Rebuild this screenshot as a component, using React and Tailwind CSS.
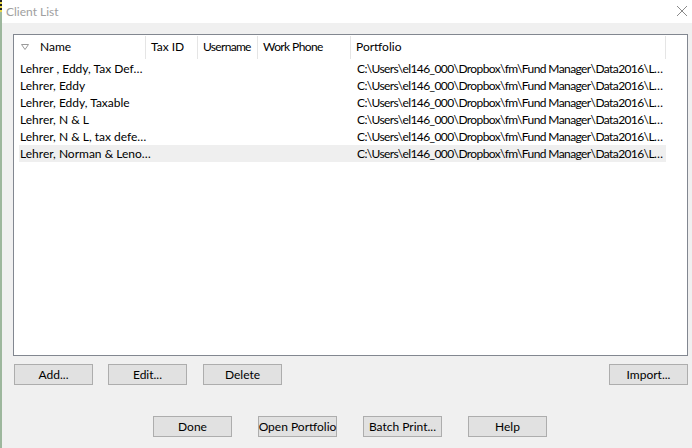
import React from "react";

const rows = [
  "Lehrer , Eddy, Tax Def…",
  "Lehrer, Eddy",
  "Lehrer, Eddy, Taxable",
  "Lehrer, N & L",
  "Lehrer, N & L, tax defe…",
  "Lehrer, Norman & Leno…",
];
const path = "C:\\Users\\el146_000\\Dropbox\\fm\\Fund Manager\\Data2016\\L…";

function Btn({ children, className = "" }) {
  return (
    <div
      className={
        "w-[79px] h-[21px] shrink-0 whitespace-nowrap bg-[#e1e1e1] border border-[#adadad] flex items-center justify-center text-[12px] text-black " +
        className
      }
    >
      {children}
    </div>
  );
}

function HeadCell({ w, children, pad = "pl-[5px]", tight = "" }) {
  return (
    <div className={"flex h-full items-start shrink-0 " + w}>
      <div className={"flex-1 h-[23px] flex items-center whitespace-nowrap overflow-hidden " + pad + " " + tight}>{children}</div>
      <div className="w-px h-[23px] mt-[1px] bg-[#e5e5e5]" />
    </div>
  );
}

export default function App() {
  return (
    <div
      className="w-[692px] h-[448px] flex bg-[#f0f0f0] overflow-hidden"
      style={{ fontFamily: 'Lato, "Noto Sans", sans-serif' }}
    >
      <div className="w-[2px] h-full flex flex-col bg-[#9db79d]">
        <div className="h-[12px] bg-[repeating-linear-gradient(180deg,#222_0px,#222_2px,#e8d84a_2px,#e8d84a_4px)]" />
      </div>
      <div className="flex-1 flex flex-col">
        <div className="h-[23px] bg-white flex items-center justify-between pl-[4px] pr-[4px]">
          <span className="text-[12px] text-[#a0a0a0]">Client List</span>
          <svg width="12" height="12" viewBox="0 0 12 12" className="mb-[2px]">
            <path d="M1 1 L11 11 M11 1 L1 11" stroke="#8a8a8a" strokeWidth="1" />
          </svg>
        </div>
        <div className="flex-1 flex flex-col pl-[11px] pr-[4px] pt-[11px]">
          <div className="h-[322px] border border-[#828790] bg-white flex flex-col text-[12px] text-black">
            <div className="h-[25px] flex">
              <HeadCell w="w-[132px]" pad="pl-[7px]">
                <svg width="8" height="6" viewBox="0 0 8 6" className="mr-[11px]">
                  <path d="M0.5 0.5 L7.5 0.5 L4 5.5 Z" fill="none" stroke="#9a9a9a" strokeWidth="1" />
                </svg>
                Name
              </HeadCell>
              <HeadCell w="w-[52px]">Tax ID</HeadCell>
              <HeadCell w="w-[60px]" tight="tracking-[-0.7px]">Username</HeadCell>
              <HeadCell w="w-[93px]" tight="tracking-[-0.6px]">Work Phone</HeadCell>
              <HeadCell w="w-[315px]">Portfolio</HeadCell>
            </div>
            <div className="flex flex-col">
              {rows.map((r, i) => (
                <div
                  key={i}
                  className={
                    "ml-[5px] w-[647px] h-[17px] flex items-center " +
                    (i === 5 ? "bg-[#efefef]" : "")
                  }
                >
                  <span className="w-[338px] shrink-0 pl-px whitespace-nowrap">{r}</span>
                  <span className="whitespace-nowrap tracking-[-0.6px]">{path}</span>
                </div>
              ))}
            </div>
          </div>
          <div className="flex mt-[8px] pl-px">
            <Btn>Add...</Btn>
            <Btn className="ml-[15px]">Edit...</Btn>
            <Btn className="ml-[16px]">Delete</Btn>
            <Btn className="ml-auto">Import...</Btn>
          </div>
          <div className="flex mt-[31px] pl-[140px] gap-[26px]">
            <Btn>Done</Btn>
            <Btn>Open Portfolio</Btn>
            <Btn>Batch Print...</Btn>
            <Btn>Help</Btn>
          </div>
        </div>
      </div>
    </div>
  );
}
